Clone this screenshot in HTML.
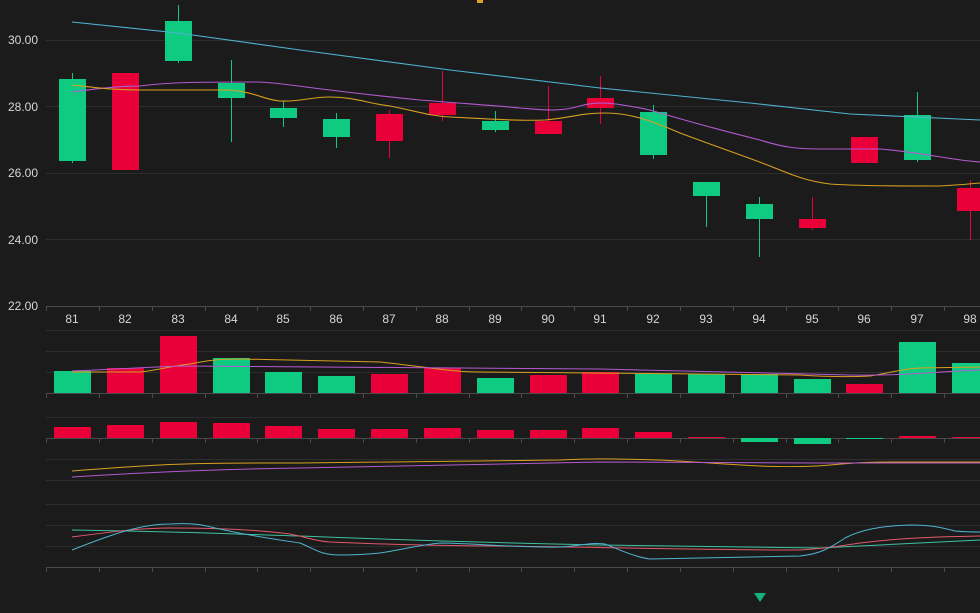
<!DOCTYPE html>
<html><head><meta charset="utf-8"><style>
html,body{margin:0;padding:0;background:#1b1b1c;width:980px;height:613px;overflow:hidden}
svg{display:block}
text{font-family:"Liberation Sans",sans-serif;fill:#d6d6d6;font-size:12px}
</style></head><body>
<svg width="980" height="613" viewBox="0 0 980 613" xmlns="http://www.w3.org/2000/svg">
<rect width="980" height="613" fill="#1b1b1c"/>
<rect x="477" y="0" width="6" height="3" fill="#e0a020"/>
<g stroke="#2e2e30" stroke-width="1">
<line x1="46" y1="40.5" x2="980" y2="40.5"/>
<line x1="46" y1="106.5" x2="980" y2="106.5"/>
<line x1="46" y1="173.5" x2="980" y2="173.5"/>
<line x1="46" y1="239.5" x2="980" y2="239.5"/>
<line x1="46" y1="330.5" x2="980" y2="330.5"/>
<line x1="46" y1="351.5" x2="980" y2="351.5"/>
<line x1="46" y1="372.5" x2="980" y2="372.5"/>
<line x1="46" y1="417.5" x2="980" y2="417.5"/>
<line x1="46" y1="459.5" x2="980" y2="459.5"/>
<line x1="46" y1="480.5" x2="980" y2="480.5"/>
<line x1="46" y1="504.5" x2="980" y2="504.5"/>
<line x1="46" y1="525.5" x2="980" y2="525.5"/>
<line x1="46" y1="546.5" x2="980" y2="546.5"/>
</g>
<g stroke="#4a4a4c" stroke-width="1">
<line x1="46" y1="306.5" x2="980" y2="306.5"/>
<line x1="46" y1="393.5" x2="980" y2="393.5"/>
<line x1="46" y1="438.5" x2="980" y2="438.5"/>
<line x1="46" y1="567.5" x2="980" y2="567.5"/>
</g>
<g stroke="#4a4a4c" stroke-width="1" id="ticks">
<path d="M46.5 306v5M99.5 306v5M152.5 306v5M205.5 306v5M257.5 306v5M310.5 306v5M363.5 306v5M416.5 306v5M469.5 306v5M521.5 306v5M574.5 306v5M627.5 306v5M680.5 306v5M733.5 306v5M786.5 306v5M838.5 306v5M891.5 306v5M944.5 306v5"/>
<path d="M46.5 393v5M99.5 393v5M152.5 393v5M205.5 393v5M257.5 393v5M310.5 393v5M363.5 393v5M416.5 393v5M469.5 393v5M521.5 393v5M574.5 393v5M627.5 393v5M680.5 393v5M733.5 393v5M786.5 393v5M838.5 393v5M891.5 393v5M944.5 393v5"/>
<path d="M46.5 438v5M99.5 438v5M152.5 438v5M205.5 438v5M257.5 438v5M310.5 438v5M363.5 438v5M416.5 438v5M469.5 438v5M521.5 438v5M574.5 438v5M627.5 438v5M680.5 438v5M733.5 438v5M786.5 438v5M838.5 438v5M891.5 438v5M944.5 438v5"/>
<path d="M46.5 567v5M99.5 567v5M152.5 567v5M205.5 567v5M257.5 567v5M310.5 567v5M363.5 567v5M416.5 567v5M469.5 567v5M521.5 567v5M574.5 567v5M627.5 567v5M680.5 567v5M733.5 567v5M786.5 567v5M838.5 567v5M891.5 567v5M944.5 567v5"/>
</g>
<g text-anchor="end">
<text x="38" y="44">30.00</text><text x="38" y="111">28.00</text><text x="38" y="177">26.00</text><text x="38" y="244">24.00</text><text x="38" y="310">22.00</text>
</g>
<g text-anchor="middle">
<text x="72" y="323">81</text><text x="125" y="323">82</text><text x="178" y="323">83</text><text x="231" y="323">84</text><text x="283" y="323">85</text><text x="336" y="323">86</text><text x="389" y="323">87</text><text x="442" y="323">88</text><text x="495" y="323">89</text><text x="548" y="323">90</text><text x="600" y="323">91</text><text x="653" y="323">92</text><text x="706" y="323">93</text><text x="759" y="323">94</text><text x="812" y="323">95</text><text x="864" y="323">96</text><text x="917" y="323">97</text><text x="970" y="323">98</text>
</g>
<!-- candles -->
<g stroke-width="1">
<g fill="#0ecb81" stroke="#0ecb81">
<line x1="72.5" y1="73" x2="72.5" y2="163"/><rect x="59" y="79" width="27" height="82" stroke="none"/>
<line x1="178.5" y1="5" x2="178.5" y2="63"/><rect x="165" y="21" width="27" height="40" stroke="none"/>
<line x1="231.5" y1="60" x2="231.5" y2="142"/><rect x="218" y="83" width="27" height="15" stroke="none"/>
<line x1="283.5" y1="101" x2="283.5" y2="127"/><rect x="270" y="108" width="27" height="10" stroke="none"/>
<line x1="336.5" y1="113" x2="336.5" y2="148"/><rect x="323" y="119" width="27" height="18" stroke="none"/>
<line x1="495.5" y1="111" x2="495.5" y2="132"/><rect x="482" y="121" width="27" height="9" stroke="none"/>
<line x1="653.5" y1="105" x2="653.5" y2="159"/><rect x="640" y="112" width="27" height="43" stroke="none"/>
<line x1="706.5" y1="182" x2="706.5" y2="227"/><rect x="693" y="182" width="27" height="14" stroke="none"/>
<line x1="759.5" y1="197" x2="759.5" y2="257"/><rect x="746" y="204" width="27" height="15" stroke="none"/>
<line x1="917.5" y1="92" x2="917.5" y2="162"/><rect x="904" y="115" width="27" height="45" stroke="none"/>
</g>
<g fill="#ea0038" stroke="#ea0038">
<rect x="112" y="73" width="27" height="97" stroke="none"/>
<line x1="389.5" y1="110" x2="389.5" y2="158"/><rect x="376" y="114" width="27" height="27" stroke="none"/>
<line x1="442.5" y1="71" x2="442.5" y2="121"/><rect x="429" y="103" width="27" height="12" stroke="none"/>
<line x1="548.5" y1="86" x2="548.5" y2="134"/><rect x="535" y="121" width="27" height="13" stroke="none"/>
<line x1="600.5" y1="76" x2="600.5" y2="124"/><rect x="587" y="98" width="27" height="10" stroke="none"/>
<line x1="812.5" y1="197" x2="812.5" y2="230"/><rect x="799" y="219" width="27" height="9" stroke="none"/>
<rect x="851" y="137" width="27" height="26" stroke="none"/>
<line x1="970.5" y1="180" x2="970.5" y2="240"/><rect x="957" y="188" width="27" height="23" stroke="none"/>
</g>
</g>
<g fill="none" stroke-width="1.1">
<path stroke="#4fb3d0" d="M72 22 L178 33 L300 50 L450 70 L600 88 L750 103 L850 114 L980 120"/>
<path stroke="#b45ad0" d="M72 92 C100 88 120 86 140 86 C170 82 200 82 260 82 C290 84 310 88 330 90 C370 95 400 98 420 100 C470 104 500 106 520 108 C545 110 560 112 580 106 C600 100 620 104 650 110 C700 125 740 135 760 140 C785 148 800 149 820 149 L880 149 C920 152 950 160 980 162"/>
<path stroke="#d8a020" d="M72 85 C100 88 115 90 140 90 L230 90 C255 92 265 100 280 101 C300 102 310 97 330 97 C355 97 370 104 390 106 C420 112 430 116 450 117 C490 119 520 121 545 120 C570 118 580 113 605 113 C630 113 650 120 680 133 C720 148 750 158 770 166 C790 174 805 181 830 184 C860 186 900 186 940 186 C960 185 970 184 980 183"/>
</g>
<!-- volume -->
<g fill="#0ecb81">
<rect x="54" y="371" width="37" height="22"/><rect x="213" y="358" width="37" height="35"/><rect x="265" y="372" width="37" height="21"/><rect x="318" y="376" width="37" height="17"/><rect x="477" y="378" width="37" height="15"/><rect x="635" y="374" width="37" height="19"/><rect x="688" y="374" width="37" height="19"/><rect x="741" y="374" width="37" height="19"/><rect x="794" y="379" width="37" height="14"/><rect x="899" y="342" width="37" height="51"/><rect x="952" y="363" width="37" height="30"/>
</g>
<g fill="#ea0038">
<rect x="107" y="368" width="37" height="25"/><rect x="160" y="336" width="37" height="57"/><rect x="371" y="374" width="37" height="19"/><rect x="424" y="368" width="37" height="25"/><rect x="530" y="375" width="37" height="18"/><rect x="582" y="372" width="37" height="21"/><rect x="846" y="384" width="37" height="9"/>
</g>
<g fill="none" stroke-width="1">
<path stroke="#d8a020" d="M72 372 L140 372 C160 370 170 366 190 364 C210 360 220 359 240 359 L380 362 C420 366 450 372 480 372 L700 374 L800 375 C830 377 850 377 870 376 C890 373 900 369 920 368 L980 367"/>
<path stroke="#b45ad0" d="M72 371 C120 369 150 367 180 366 L600 369 C700 372 780 374 850 375 C900 376 930 372 980 370"/>
</g>
<!-- macd -->
<g fill="#ea0038">
<rect x="54" y="427" width="37" height="11"/><rect x="107" y="425" width="37" height="13"/><rect x="160" y="422" width="37" height="16"/><rect x="213" y="423" width="37" height="15"/><rect x="265" y="426" width="37" height="12"/><rect x="318" y="429" width="37" height="9"/><rect x="371" y="429" width="37" height="9"/><rect x="424" y="428" width="37" height="10"/><rect x="477" y="430" width="37" height="8"/><rect x="530" y="430" width="37" height="8"/><rect x="582" y="428" width="37" height="10"/><rect x="635" y="432" width="37" height="6"/><rect x="688" y="437" width="37" height="1"/><rect x="899" y="436" width="37" height="2"/><rect x="952" y="437" width="37" height="1"/>
</g>
<g fill="#0ecb81">
<rect x="741" y="438" width="37" height="4"/><rect x="794" y="438" width="37" height="6"/><rect x="846" y="438" width="37" height="1"/>
</g>
<!-- kdj-ish -->
<g fill="none" stroke-width="1">
<path stroke="#d8a020" d="M72 471 C110 468 140 466 160 465 C200 463 240 463 300 463 L560 460 C600 458 620 459 660 460 C700 462 720 464 760 466 C790 467 810 467 830 465 C860 462 880 462 900 462 L980 462"/>
<path stroke="#b45ad0" d="M72 477 C150 472 220 469 300 468 L600 462 L820 463 L980 463"/>
<path stroke="#3fc0a0" d="M72 530 C200 532 260 535 300 536 C400 540 500 543 600 545 L820 548 C880 545 930 542 980 540"/>
<path stroke="#e05a6a" d="M72 537 C110 532 140 528 170 528 C220 528 260 530 290 534 C310 538 315 541 330 542 C400 545 450 546 500 546 C600 547 700 550 800 550 C830 548 840 546 860 543 C900 538 930 537 980 536"/>
<path stroke="#4fb3d0" d="M72 550 C110 535 140 524 170 524 C190 523 200 524 215 528 C250 536 280 540 300 543 C315 549 320 555 340 555 C360 555 370 554 380 553 C400 550 420 545 440 543 C470 543 520 548 560 547 C580 546 590 542 605 544 C620 550 635 557 650 559 C700 558 750 557 800 556 C820 554 830 548 845 538 C860 530 880 526 910 525 C930 525 940 527 955 531 C965 532 975 532 980 532"/>
</g>
<path d="M754 593 L766 593 L760 602 Z" fill="#16b07e"/>
</svg>
</body></html>
